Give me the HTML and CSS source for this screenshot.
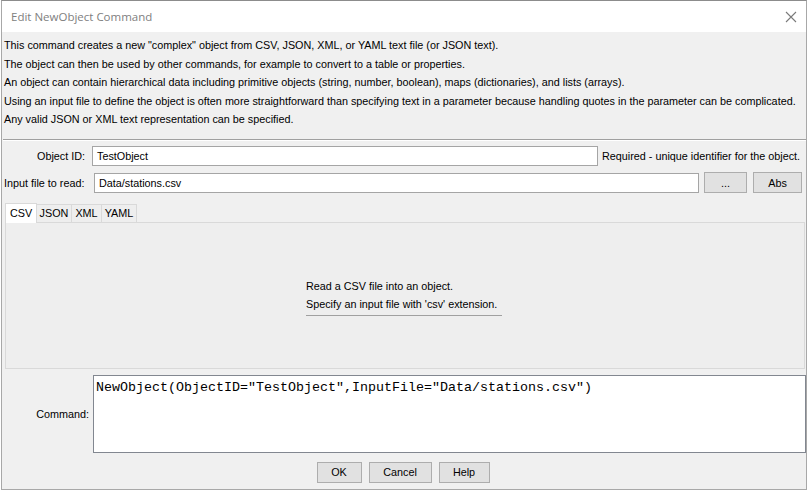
FILE: index.html
```
<!DOCTYPE html>
<html>
<head>
<meta charset="utf-8">
<link rel="stylesheet" href="styles.css">
</head>
<body>
<div class="window">
  <div class="titlebar">
    <span class="title">Edit NewObject Command</span>
    <svg class="close" width="12" height="12" viewBox="0 0 12 12"><path d="M1 1 L11 11 M11 1 L1 11" stroke="#7a7a7a" stroke-width="1.1" fill="none"/></svg>
  </div>
  <div class="content">
    <div class="desc">
      <div>This command creates a new "complex" object from CSV, JSON, XML, or YAML text file (or JSON text).</div>
      <div>The object can then be used by other commands, for example to convert to a table or properties.</div>
      <div>An object can contain hierarchical data including primitive objects (string, number, boolean), maps (dictionaries), and lists (arrays).</div>
      <div>Using an input file to define the object is often more straightforward than specifying text in a parameter because handling quotes in the parameter can be complicated.</div>
      <div>Any valid JSON or XML text representation can be specified.</div>
    </div>
    <div class="sep"></div>
    <div class="row row-id">
      <label class="lbl">Object ID:</label>
      <div class="field field-id">TestObject</div>
      <span class="note">Required - unique identifier for the object.</span>
    </div>
    <div class="row row-file">
      <label class="lbl lbl-file">Input file to read:</label>
      <div class="field field-file">Data/stations.csv</div>
      <button class="btn btn-dots">...</button>
      <button class="btn btn-abs">Abs</button>
    </div>
    <div class="tabs">
      <div class="tabstrip">
        <div class="tab sel">CSV</div>
        <div class="tab">JSON</div>
        <div class="tab">XML</div>
        <div class="tab">YAML</div>
      </div>
      <div class="panel">
        <div class="panel-text">
          <div>Read a CSV file into an object.</div>
          <div>Specify an input file with 'csv' extension.</div>
          <div class="uline"></div>
        </div>
      </div>
    </div>
    <div class="cmdrow">
      <label class="lbl lbl-cmd">Command:</label>
      <div class="cmd">NewObject(ObjectID="TestObject",InputFile="Data/stations.csv")</div>
    </div>
    <div class="buttons">
      <button class="btn btn-ok">OK</button>
      <button class="btn btn-cancel">Cancel</button>
      <button class="btn btn-help">Help</button>
    </div>
  </div>
</div>
</body>
</html>
```
FILE: styles.css
```
* { box-sizing: border-box; }
html, body { margin: 0; padding: 0; background: #ffffff; }
body {
  width: 807px; height: 493px; overflow: hidden;
  font-family: "Liberation Sans", Arial, sans-serif;
  font-size: 10.8px; color: #000;
}
.window {
  margin-left: 1px;
  width: 806px; height: 490px;
  border: 1px solid #a8a8a8;
  border-top-color: #8c8c8c;
  background: #f0f0f0;
  display: flex; flex-direction: column;
}
.titlebar {
  height: 31px; background: #fff;
  display: flex; align-items: center; justify-content: space-between;
  padding: 0 9px 0 9px;
}
.title {
  font-family: "Open Sans", "Noto Sans", sans-serif;
  font-size: 11.5px; color: #808080;
}
.close { margin-top: 1px; }
.content { flex: 1; display: flex; flex-direction: column; }
.desc { padding: 4px 0 0 2px; line-height: 18.5px; white-space: nowrap; }
.sep { margin: 10px 0 0 1px; border-top: 1px solid #a0a0a0; border-bottom: 1px solid #ffffff; }
.row { display: flex; align-items: center; height: 20px; }
.row-id { margin-top: 5px; }
.row-file { margin-top: 7px; }
.lbl { width: 86px; text-align: right; padding-right: 3px; white-space: nowrap; }
.lbl-file { width: 88px; text-align: left; padding-left: 2px; padding-right: 0; }
.field {
  height: 20px; background: #fff; border: 1px solid #a5a5a5;
  padding: 0 4px; line-height: 18px; white-space: nowrap;
}
.field-id { width: 506px; margin-left: 4px; }
.note { margin-left: 4px; white-space: nowrap; }
.field-file { width: 605px; margin-left: 4px; }
.btn {
  font-family: "Liberation Sans", Arial, sans-serif; font-size: 10.8px; color: #000;
  height: 21px; background: #e1e1e1; border: 1px solid #adadad;
  padding: 0; margin: 0;
}
.btn-dots { width: 43px; margin-left: 5px; }
.btn-abs { width: 49px; margin-left: 6px; }
.tabs { margin: 10px 0 0 3px; width: 800px; display: flex; flex-direction: column; }
.tabstrip { display: flex; align-items: flex-end; height: 19px; padding-left: 0; }
.tab {
  height: 18px; line-height: 16px; padding: 0 6px;
  background: #eeeeee; border: 1px solid #d9d9d9; border-bottom: none;
  margin-left: -1px;
}
.tab:first-child { margin-left: 0; }
.tab.sel { height: 20px; background: #fff; line-height: 18px; width: 32px; text-align: center; padding: 0; position: relative; z-index: 1; margin-bottom: -1px; }
.tab:nth-child(2) { width: 36px; text-align: center; padding: 0; }
.tab:nth-child(3) { width: 31px; text-align: center; padding: 0; }
.tab:nth-child(4) { width: 36px; text-align: center; padding: 0; }
.panel {
  height: 147px; background: #eeeeee; border: 1px solid #d9d9d9;
  display: flex; align-items: center; justify-content: center;
}
.panel-text { line-height: 18px; padding-top: 2px; padding-right: 2px; }
.uline { margin-top: 2px; border-top: 1px solid #a0a0a0; width: 196px; }
.cmdrow { display: flex; align-items: center; margin-top: 6px; }
.lbl-cmd { width: 91px; padding-right: 4px; }
.cmd {
  width: 713px; height: 78px; background: #fff; border: 1px solid #828790;
  font-family: "Liberation Mono", "Courier New", monospace; font-size: 13.33px;
  line-height: 16px; padding: 4px 2px; white-space: nowrap;
}
.buttons { display: flex; justify-content: center; gap: 7px; margin-top: 9px; padding-right: 2px; }
.btn-ok { width: 45px; }
.btn-cancel { width: 63px; }
.btn-help { width: 51px; }
```
